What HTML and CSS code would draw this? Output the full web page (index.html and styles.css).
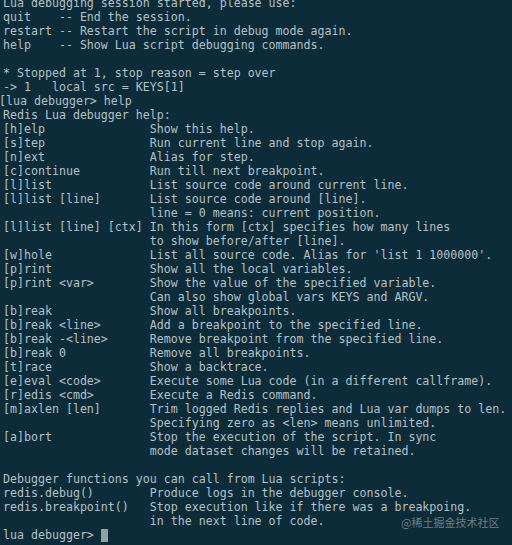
FILE: index.html
```
<!DOCTYPE html>
<html lang="en">
<head>
<meta charset="utf-8">
<title>Lua debugger</title>
<link rel="stylesheet" href="styles.css">
</head>
<body>
<main class="terminal">
<pre class="output">Lua debugging session started, please use:
quit    -- End the session.
restart -- Restart the script in debug mode again.
help    -- Show Lua script debugging commands.

* Stopped at 1, stop reason = step over
-> 1   local src = KEYS[1]
<span class="bracket">[</span>lua debugger> help
Redis Lua debugger help:
[h]elp               Show this help.
[s]tep               Run current line and stop again.
[n]ext               Alias for step.
[c]continue          Run till next breakpoint.
[l]list              List source code around current line.
[l]list [line]       List source code around [line].
                     line = 0 means: current position.
[l]list [line] [ctx] In this form [ctx] specifies how many lines
                     to show before/after [line].
[w]hole              List all source code. Alias for 'list 1 1000000'.
[p]rint              Show all the local variables.
[p]rint &lt;var&gt;        Show the value of the specified variable.
                     Can also show global vars KEYS and ARGV.
[b]reak              Show all breakpoints.
[b]reak &lt;line&gt;       Add a breakpoint to the specified line.
[b]reak -&lt;line&gt;      Remove breakpoint from the specified line.
[b]reak 0            Remove all breakpoints.
[t]race              Show a backtrace.
[e]eval &lt;code&gt;       Execute some Lua code (in a different callframe).
[r]edis &lt;cmd&gt;        Execute a Redis command.
[m]axlen [len]       Trim logged Redis replies and Lua var dumps to len.
                     Specifying zero as &lt;len&gt; means unlimited.
[a]bort              Stop the execution of the script. In sync
                     mode dataset changes will be retained.

Debugger functions you can call from Lua scripts:
redis.debug()        Produce logs in the debugger console.
redis.breakpoint()   Stop execution like if there was a breakpoing.
                     in the next line of code.
lua debugger> <span class="cursor"></span></pre>
<div class="watermark">@稀土掘金技术社区</div>
</main>
</body>
</html>
```
FILE: styles.css
```
html, body {
  margin: 0;
  padding: 0;
  background: #0c2c39;
}

.terminal {
  position: relative;
  width: 512px;
  height: 545px;
  overflow: hidden;
  background: #0c2c39;
}

.output {
  margin: -4px 0 0 0;
  padding: 0 0 0 3px;
  font-family: "DejaVu Sans Mono", monospace;
  font-size: 11.62px;
  line-height: 14px;
  color: #b6c1c5;
  white-space: pre;
}

.bracket {
  margin-left: -4px;
}

.cursor {
  display: inline-block;
  width: 7px;
  height: 13px;
  vertical-align: -3px;
  background: #8fa2a8;
}

.watermark {
  position: absolute;
  left: 401px;
  top: 514px;
  font-family: "Noto Sans CJK SC", sans-serif;
  font-size: 11px;
  line-height: 16px;
  color: rgba(160, 176, 182, 0.65);
}
```
